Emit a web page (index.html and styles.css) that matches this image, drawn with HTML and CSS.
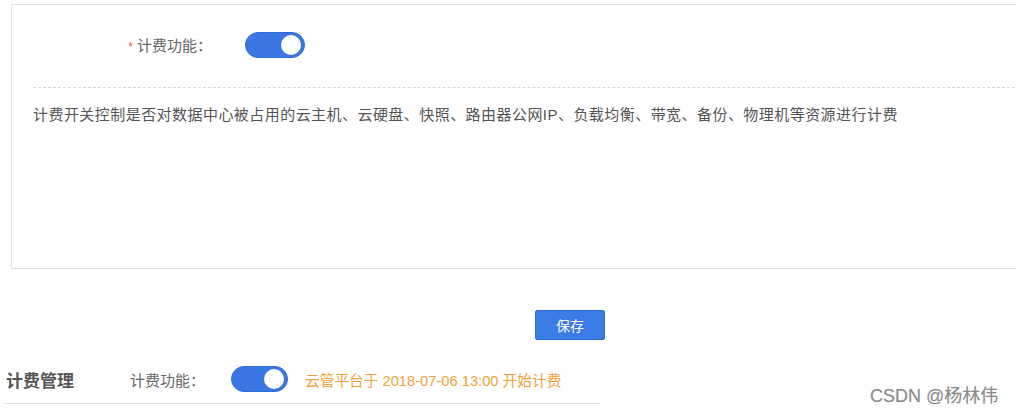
FILE: index.html
```html
<!DOCTYPE html>
<html lang="zh-CN">
<head>
    <meta charset="UTF-8">
    <meta name="viewport" content="width=device-width, initial-scale=1.0">
    <title>计费管理</title>
    <link rel="stylesheet" href="styles.css">
</head>
<body>
    <div class="page">
        <div class="panel">
            <div class="form-row">
                <label class="form-label"><span class="required">*</span>计费功能：</label>
                <span class="switch"><span class="knob"></span></span>
            </div>
            <div class="divider"></div>
            <p class="desc">计费开关控制是否对数据中心被占用的云主机、云硬盘、快照、路由器公网IP、负载均衡、带宽、备份、物理机等资源进行计费</p>
        </div>

        <div class="actions">
            <button type="button" class="save-button">保存</button>
        </div>

        <div class="billing-bar">
            <h3 class="billing-title">计费管理</h3>
            <span class="billing-label">计费功能：</span>
            <span class="switch switch-small"><span class="knob"></span></span>
            <span class="billing-note">云管平台于 2018-07-06 13:00 开始计费</span>
        </div>
    </div>

    <div class="watermark">CSDN @杨林伟</div>
</body>
</html>
```

FILE: styles.css
```css
* {
    margin: 0;
    padding: 0;
    box-sizing: border-box;
    font-family: "Liberation Sans", "Noto Sans CJK SC", sans-serif;
}

body {
    width: 1016px;
    height: 412px;
    overflow: hidden;
    background-color: #fff;
    color: #555;
    position: relative;
}

.page {
    padding-top: 4px;
}

.panel {
    margin-left: 11px;
    width: 1040px;
    height: 265px;
    border: 1px solid #dde3ee;
    padding: 0 0 0 21px;
}

.form-row {
    display: flex;
    align-items: center;
    height: 80px;
    padding-bottom: 1px;
}

.form-label {
    width: 179px;
    text-align: right;
    font-size: 15px;
    color: #666;
}

.required {
    color: #e8534f;
    margin-right: 4px;
    font-size: 12px;
}

.switch {
    display: inline-flex;
    align-items: center;
    justify-content: flex-end;
    width: 60px;
    height: 26px;
    margin-left: 33px;
    border-radius: 13px;
    background-color: #3a77e2;
    border: 1px solid #2f6bd6;
    padding-right: 3px;
}

.knob {
    width: 20px;
    height: 20px;
    border-radius: 50%;
    background-color: #fff;
}

.divider {
    border-top: 1px dashed #cfd7e4;
    margin-top: 2px;
}

.desc {
    font-size: 15px;
    letter-spacing: 0.45px;
    color: #555;
    margin-top: 16px;
    line-height: 22px;
}

.actions {
    padding: 41px 0 0 535px;
}

.save-button {
    width: 70px;
    height: 30px;
    border: 1px solid #2f6bd6;
    border-radius: 2px;
    background-color: #3b7be6;
    color: #fff;
    font-size: 14px;
    cursor: pointer;
}

.billing-bar {
    display: flex;
    align-items: center;
    width: 595px;
    margin: 21px 0 0 5px;
    height: 43px;
    padding-bottom: 6px;
    border-bottom: 1px solid #e2e2e2;
}

.billing-title {
    font-size: 17px;
    font-weight: bold;
    color: #555;
    width: 125px;
    padding-left: 1px;
}

.billing-label {
    font-size: 15px;
    color: #666;
}

.switch-small {
    width: 57px;
    margin-left: 26px;
}

.billing-note {
    margin-left: 17px;
    font-size: 14.7px;
    color: #f0a23a;
}

.watermark {
    position: absolute;
    left: 870px;
    top: 381px;
    font-size: 18px;
    color: #8a8a8a;
    text-shadow: 0 0 1px #ddd;
}
```
